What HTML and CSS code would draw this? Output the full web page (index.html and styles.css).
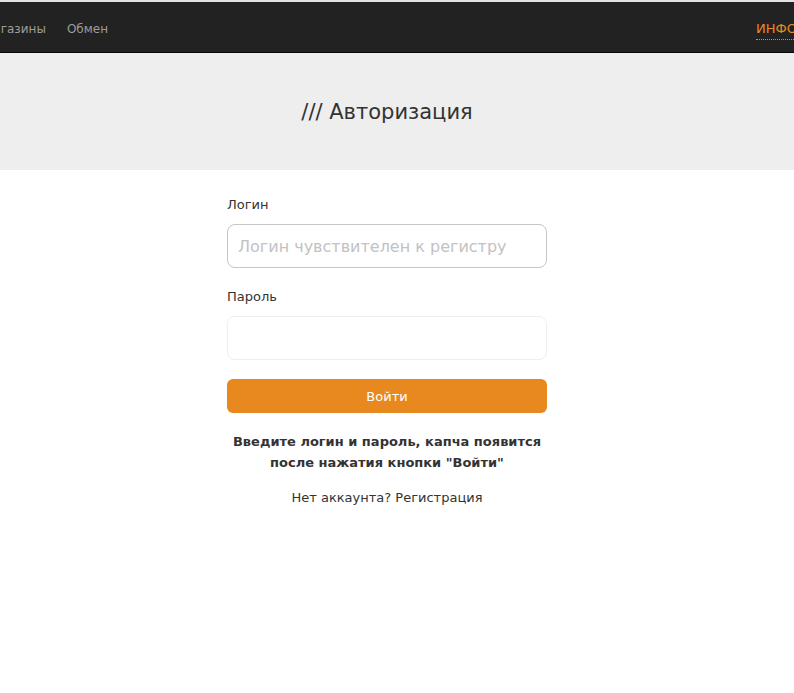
FILE: index.html
```html
<!DOCTYPE html>
<html lang="ru">

<head>
    <meta charset="UTF-8">
    <title>Авторизация</title>
    <link rel="stylesheet" href="styles.css">
</head>

<body>
    <nav class="navbar">
        <div class="nav-inner">
            <ul class="nav-list">
                <li><a href="#">Магазины</a></li>
                <li><a href="#">Обмен</a></li>
            </ul>
            <ul class="nav-list nav-right">
                <li><a href="#" class="nav-info">ИНФОРМАЦИЯ</a></li>
            </ul>
        </div>
    </nav>

    <div class="page-title">
        <h1>/// Авторизация</h1>
    </div>

    <div class="container">
        <form class="login-form">
            <div class="form-group">
                <label for="login">Логин</label>
                <input type="text" id="login" class="input input-focus" placeholder="Логин чувствителен к регистру" autofocus>
            </div>
            <div class="form-group">
                <label for="password">Пароль</label>
                <input type="password" id="password" class="input">
            </div>
            <button type="submit" class="btn">Войти</button>
            <p class="hint">Введите логин и пароль, капча появится после нажатия кнопки "Войти"</p>
            <p class="register">Нет аккаунта? <a href="#">Регистрация</a></p>
        </form>
    </div>
</body>

</html>
```

FILE: styles.css
```css
html {
    overflow: hidden;
}

body {
    font-family: "DejaVu Sans", sans-serif;
    margin: 0;
    padding: 0;
    background-color: #fff;
    color: #333;
    border-top: 2px solid #e2e2e2;
}

.navbar {
    background-color: #222;
    border-bottom: 1px solid #080808;
    height: 50px;
    display: flex;
    overflow: hidden;
}

.nav-inner {
    flex: 0 0 811px;
    margin-left: -17px;
    display: flex;
    justify-content: space-between;
    align-items: center;
}

.nav-list {
    list-style: none;
    margin: 0;
    padding: 0;
    display: flex;
    gap: 21px;
}

.nav-right {
    flex: 0 0 38px;
    min-width: 0;
    width: 38px;
    white-space: nowrap;
}

.nav-list a {
    color: #9d9d9d;
    font-size: 12px;
    text-decoration: none;
}

.nav-list a.nav-info {
    color: #e8891f;
    font-size: 13px;
    border-bottom: 1px dotted #e8891f;
    padding-bottom: 3px;
}

.page-title {
    background-color: #eee;
    height: 117px;
    display: flex;
    justify-content: center;
    align-items: center;
}

.page-title h1 {
    margin: 0 0 0 -20px;
    font-size: 21px;
    font-weight: normal;
    color: #333;
}

.container {
    display: flex;
    justify-content: center;
    padding-top: 27px;
}

.login-form {
    width: 320px;
    margin-left: -20px;
}

.form-group {
    margin-bottom: 21px;
}

.form-group:last-of-type {
    margin-bottom: 19px;
}

.form-group label {
    display: block;
    font-size: 13px;
    margin-bottom: 12px;
}

.input {
    display: block;
    box-sizing: border-box;
    width: 100%;
    height: 44px;
    padding: 0 10px;
    border: 1px solid #eee;
    border-radius: 8px;
    font-family: "DejaVu Sans", sans-serif;
    font-size: 16px;
    color: #333;
    outline: none;
}

.input-focus {
    border-color: #c6c6c6;
}

.input::placeholder {
    color: #c2c2c2;
}

.btn {
    display: block;
    width: 100%;
    height: 34px;
    border: none;
    border-radius: 6px;
    background-color: #e8891f;
    color: #fff;
    font-family: "DejaVu Sans", sans-serif;
    font-size: 13px;
    cursor: pointer;
}

.hint {
    font-size: 13px;
    font-weight: bold;
    text-align: center;
    line-height: 21px;
    margin: 18px 0 0;
}

.register {
    font-size: 13px;
    text-align: center;
    margin: 17px 0 0;
}

.register a {
    color: #333;
    text-decoration: none;
    border-bottom: 1px dotted #888;
    padding-bottom: 2px;
}
```
